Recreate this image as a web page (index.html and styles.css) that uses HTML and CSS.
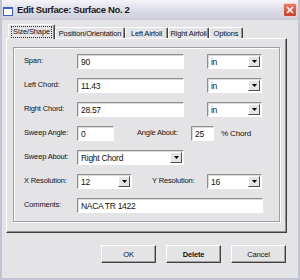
FILE: index.html
```html
<!DOCTYPE html>
<html>

<head>
    <meta http-equiv="Content-Type" content="text/html;charset=UTF-8">
    <title>Edit Surface</title>
    <link rel="stylesheet" href="styles.css">
</head>

<body>
    <div class="window">
        <div class="titlebar">
            <span class="app-icon"></span>
            <span class="title">Edit Surface: Surface No. 2</span>
            <span class="close">
                <svg width="8" height="8" viewBox="0 0 8 8">
                    <path d="M1 1 L7 7 M7 1 L1 7" stroke="#fff" stroke-width="1.6" />
                </svg>
            </span>
        </div>
        <div class="content">
            <div class="tabs">
                <div class="tab active"><span class="focus">Size/Shape</span></div>
                <div class="tab t-pos">Position/Orientation</div>
                <div class="tab t-left">Left Airfoil</div>
                <div class="tab t-right">Right Airfoil</div>
                <div class="tab t-opt">Options</div>
            </div>
            <div class="panel">
                <div class="group">
                    <div class="row">
                        <span class="lbl">Span:</span>
                        <span class="field w-long">90</span>
                        <span class="select w-unit gap-unit"><span class="val">in</span><span class="drop"><svg width="5" height="3" viewBox="0 0 5 3"><path d="M0 0 H5 L2.5 3 Z" fill="#000" /></svg></span></span>
                    </div>
                    <div class="row">
                        <span class="lbl">Left Chord:</span>
                        <span class="field w-long">11.43</span>
                        <span class="select w-unit gap-unit"><span class="val">in</span><span class="drop"><svg width="5" height="3" viewBox="0 0 5 3"><path d="M0 0 H5 L2.5 3 Z" fill="#000" /></svg></span></span>
                    </div>
                    <div class="row">
                        <span class="lbl">Right Chord:</span>
                        <span class="field w-long">28.57</span>
                        <span class="select w-unit gap-unit"><span class="val">in</span><span class="drop"><svg width="5" height="3" viewBox="0 0 5 3"><path d="M0 0 H5 L2.5 3 Z" fill="#000" /></svg></span></span>
                    </div>
                    <div class="row">
                        <span class="lbl">Sweep Angle:</span>
                        <span class="field w-short">0</span>
                        <span class="lbl lbl-angle">Angle About:</span>
                        <span class="field w-tiny">25</span>
                        <span class="unit">% Chord</span>
                    </div>
                    <div class="row">
                        <span class="lbl">Sweep About:</span>
                        <span class="select w-long"><span class="val">Right Chord</span><span class="drop"><svg width="5" height="3" viewBox="0 0 5 3"><path d="M0 0 H5 L2.5 3 Z" fill="#000" /></svg></span></span>
                    </div>
                    <div class="row">
                        <span class="lbl">X Resolution:</span>
                        <span class="select w-unit"><span class="val">12</span><span class="drop"><svg width="5" height="3" viewBox="0 0 5 3"><path d="M0 0 H5 L2.5 3 Z" fill="#000" /></svg></span></span>
                        <span class="lbl lbl-yres">Y Resolution:</span>
                        <span class="select w-unit"><span class="val">16</span><span class="drop"><svg width="5" height="3" viewBox="0 0 5 3"><path d="M0 0 H5 L2.5 3 Z" fill="#000" /></svg></span></span>
                    </div>
                    <div class="row">
                        <span class="lbl">Comments:</span>
                        <span class="field w-full">NACA TR 1422</span>
                    </div>
                </div>
            </div>
            <div class="buttons">
                <button class="btn">OK</button>
                <button class="btn btn-default">Delete</button>
                <button class="btn">Cancel</button>
            </div>
        </div>
    </div>
</body>

</html>
```

FILE: styles.css
```css
* {
    box-sizing: border-box;
    margin: 0;
    padding: 0;
}

body {
    width: 300px;
    height: 280px;
    overflow: hidden;
    background: #e4e4e6;
    font-family: "Liberation Sans", Arial, sans-serif;
    font-size: 7.5px;
    letter-spacing: -0.15px;
    color: #111;
}

.window {
    width: 300px;
    height: 280px;
    border: 2px solid #c2c4d4;
    border-top: none;
    background: #e4e4e6;
}

.titlebar {
    height: 20px;
    display: flex;
    align-items: center;
    padding: 0 1px 0 1px;
    background: linear-gradient(#f4f4f8, #e0e0ea 45%, #d0d0dc);
    border-bottom: 1px solid #c8c8d4;
}

.app-icon {
    width: 10px;
    height: 9px;
    margin-top: 3px;
    background: #fff;
    border: 1px solid #3a64c0;
    border-top-width: 2px;
}

.title {
    margin-left: 4px;
    font-size: 9.5px;
    letter-spacing: -0.35px;
    font-weight: bold;
    color: #1a1a1a;
}

.close {
    margin-left: auto;
    width: 14px;
    height: 14px;
    border-radius: 2px;
    border: 1px solid #f0d0c8;
    background: linear-gradient(#e87a62, #c8402c);
    display: flex;
    align-items: center;
    justify-content: center;
}

.content {
    padding: 4px 11px 0 4px;
}

.tabs {
    display: flex;
    align-items: flex-end;
    height: 14px;
    padding-left: 2px;
}

.tab {
    height: 11px;
    display: flex;
    align-items: center;
    justify-content: center;
    border-top: 1px solid #fff;
    border-left: 1px solid #fff;
    border-right: 1px solid #404040;
    box-shadow: inset -1px 0 0 #909090;
    border-radius: 2px 2px 0 0;
    white-space: nowrap;
}

.tab.active {
    width: 47px;
    height: 15px;
    margin-bottom: -1px;
    position: relative;
    background: #e4e4e6;
}

.focus {
    border: 1px dotted #333;
    padding: 0 1px;
    line-height: 10px;
}

.t-pos {
    width: 70px;
}

.t-left {
    width: 43px;
}

.t-right {
    width: 41px;
}

.t-opt {
    width: 34px;
}

.panel {
    height: 195px;
    border-top: 1px solid #fff;
    border-left: 1px solid #fff;
    border-right: 1px solid #404040;
    border-bottom: 1px solid #404040;
    box-shadow: inset -1px -1px 0 #909090;
    padding: 8px 6px 0 6px;
}

.group {
    height: 175px;
    border: 1px solid #a0a0a4;
    box-shadow: 1px 1px 0 #fff, inset 1px 1px 0 #fff;
    padding: 6px 0 0 10px;
}

.row {
    display: flex;
    align-items: center;
    height: 15px;
    margin-bottom: 9px;
}

.lbl {
    width: 53px;
    margin-top: -3px;
    white-space: nowrap;
}

.field,
.select {
    height: 15px;
    background: #fff;
    border-top: 1px solid #909090;
    border-left: 1px solid #909090;
    border-right: 1px solid #fff;
    border-bottom: 1px solid #fff;
    box-shadow: inset 1px 1px 0 #d8d8d8;
    display: flex;
    align-items: center;
    padding-left: 3px;
    font-size: 8.5px;
    letter-spacing: -0.3px;
}

.select {
    padding-right: 1px;
}

.val {
    flex: 1;
}

.drop {
    width: 12px;
    height: 11px;
    background: #e4e4e6;
    border-top: 1px solid #fff;
    border-left: 1px solid #fff;
    border-right: 1px solid #505050;
    border-bottom: 1px solid #505050;
    display: flex;
    align-items: center;
    justify-content: center;
}

.w-long {
    width: 107px;
}

.w-unit {
    width: 55px;
}

.gap-unit {
    margin-left: 23px;
}

.w-short {
    width: 37px;
}

.w-tiny {
    width: 23px;
}

.w-full {
    width: 186px;
}

.lbl-angle {
    width: 54px;
    margin-left: 23px;
}

.lbl-yres {
    width: 55px;
    margin-left: 20px;
}

.unit {
    margin-left: 7px;
    margin-top: -1px;
    font-size: 8px;
}

.buttons {
    display: flex;
    justify-content: flex-end;
    gap: 10px;
    margin-top: 12px;
    padding-right: 1px;
}

.btn {
    width: 55px;
    height: 18px;
    font-family: inherit;
    font-size: 7.5px;
    letter-spacing: -0.15px;
    color: #111;
    background: #e4e4e6;
    border-top: 1px solid #fff;
    border-left: 1px solid #fff;
    border-right: 1px solid #404040;
    border-bottom: 1px solid #404040;
    box-shadow: inset -1px -1px 0 #a0a0a0;
}

.btn-default {
    font-weight: bold;
}
```
